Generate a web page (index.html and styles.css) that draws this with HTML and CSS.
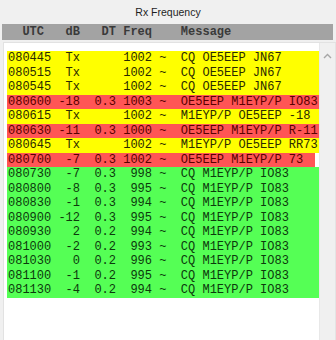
FILE: index.html
```html
<!DOCTYPE html>
<html>
<head>
<meta charset="utf-8">
<link rel="stylesheet" href="styles.css">
</head>
<body>
<div class="win">
  <div class="title">Rx Frequency</div>
  <div class="header">  UTC   dB   DT Freq    Message</div>
  <div class="panel">
    <div class="list">
      <div class="row tx">080445  Tx      1002 ~  CQ OE5EEP JN67</div>
      <div class="row tx">080515  Tx      1002 ~  CQ OE5EEP JN67</div>
      <div class="row tx">080545  Tx      1002 ~  CQ OE5EEP JN67</div>
      <div class="row me">080600 -18  0.3 1003 ~  OE5EEP M1EYP/P IO83</div>
      <div class="row tx">080615  Tx      1002 ~  M1EYP/P OE5EEP -18</div>
      <div class="row me">080630 -11  0.3 1000 ~  OE5EEP M1EYP/P R-11</div>
      <div class="row tx">080645  Tx      1002 ~  M1EYP/P OE5EEP RR73</div>
      <div class="row me short">080700  -7  0.3 1002 ~  OE5EEP M1EYP/P 73</div>
      <div class="row cq">080730  -7  0.3  998 ~  CQ M1EYP/P IO83</div>
      <div class="row cq">080800  -8  0.3  995 ~  CQ M1EYP/P IO83</div>
      <div class="row cq">080830  -1  0.3  994 ~  CQ M1EYP/P IO83</div>
      <div class="row cq">080900 -12  0.3  995 ~  CQ M1EYP/P IO83</div>
      <div class="row cq">080930   2  0.2  994 ~  CQ M1EYP/P IO83</div>
      <div class="row cq">081000  -2  0.2  993 ~  CQ M1EYP/P IO83</div>
      <div class="row cq">081030   0  0.2  996 ~  CQ M1EYP/P IO83</div>
      <div class="row cq">081100  -1  0.2  995 ~  CQ M1EYP/P IO83</div>
      <div class="row cq">081130  -4  0.2  994 ~  CQ M1EYP/P IO83</div>
    </div>
    <div class="scroll">
      <svg class="arrow" width="9" height="6" viewBox="0 0 9 6"><path d="M1 5 L4.5 1.5 L8 5" fill="none" stroke="#a6a6a6" stroke-width="1.4"/></svg>
    </div>
  </div>
</div>
</body>
</html>
```
FILE: styles.css
```css
html, body {
  margin: 0;
  padding: 0;
  background: #f0f0f0;
}
.win {
  width: 336px;
  height: 340px;
  overflow: hidden;
  display: flex;
  flex-direction: column;
}
.title {
  height: 24px;
  line-height: 25px;
  text-align: center;
  font-family: "Liberation Sans", Arial, sans-serif;
  font-size: 10.5px;
  color: #1e1e1e;
}
.header {
  height: 16px;
  margin: 0 3px 0 2px;
  background: #a3a3a3;
  font-family: "Liberation Mono", "Courier New", monospace;
  font-size: 12px;
  font-weight: bold;
  line-height: 16px;
  white-space: pre;
  color: #3a3a3a;
  padding-left: 6px;
}
.panel {
  flex: 1;
  display: flex;
  margin: 2px 0 0 3px;
  border-top: 1px solid #e2e2e2;
  border-left: 1px solid #e2e2e2;
  min-height: 0;
}
.list {
  flex: 1;
  background: #ffffff;
  padding: 8px 0 0 3px;
  overflow: hidden;
}
.row {
  height: 14.5px;
  line-height: 14.5px;
  font-family: "Liberation Mono", "Courier New", monospace;
  font-size: 12px;
  white-space: pre;
  overflow: hidden;
  padding-left: 1px;
}
.tx {
  background: #ffff00;
  color: #2a2a00;
}
.me {
  background: #ff5555;
  color: #5a0000;
}
.short {
  margin-right: 4px;
}
.cq {
  background: #55ff55;
  color: #0c3a0c;
}
.scroll {
  width: 17px;
  background: #f0f0f0;
  border-left: 1px solid #e8e8e8;
  border-right: 1px solid #e4e4e4;
  display: flex;
  flex-direction: column;
  align-items: center;
  padding-top: 10px;
  box-sizing: border-box;
}
.arrow {
  display: block;
}
```
